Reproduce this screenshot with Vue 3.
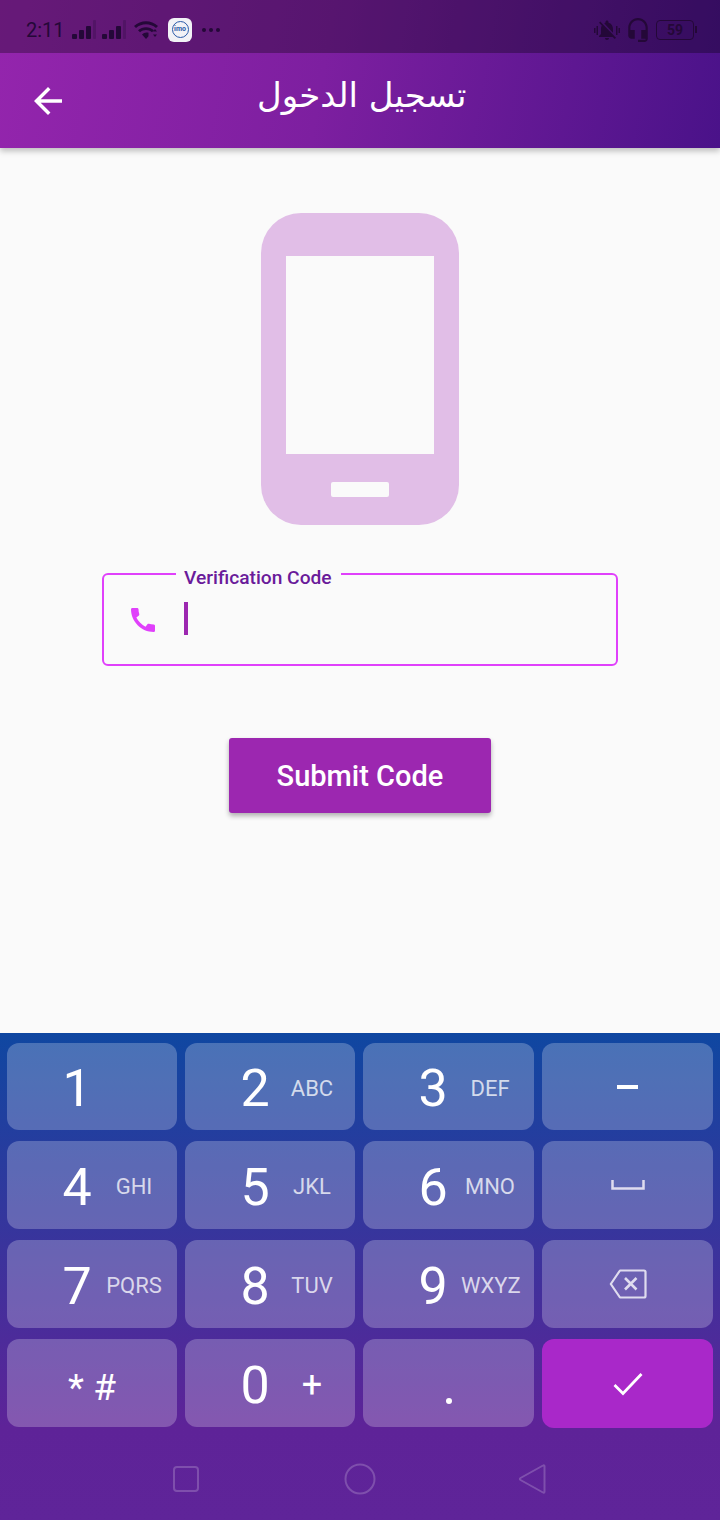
<template>
  <div class="screen">
    <header class="header">
      <div class="status">
        <div class="status-left">
          <span class="time">2:11</span>
          <svg v-for="n in 2" :key="n" class="signal" width="24" height="22" viewBox="0 0 24 22">
            <rect x="0" y="15" width="5" height="5" rx="1" />
            <rect x="7" y="11" width="5" height="9" rx="1" />
            <rect x="14" y="7" width="5" height="13" rx="1" />
            <rect x="21" y="1" width="3" height="19" rx="1" opacity="0.25" />
          </svg>
          <svg class="wifi" width="25" height="22" viewBox="0 0 25 22">
            <path d="M0 7l2 2c5.8-5 14.2-5 20 0l2-2C17.200.7 6.800.7 0 7zm4 4.300l2 2c3.500-3 8.500-3 12 0l2-2c-4.600-4-11.400-4-16 0zm4 4.200l4 4.500 2.500-2.800V13.800c-2.300-.8-4.700-.2-6.500 1.700z" />
            <path d="M19 12.500l2-2.500 2 2.500zM19 15.500l2 2.500 2-2.500z" />
          </svg>
          <span class="imo">
            <span class="imo-ring">imo</span>
          </span>
          <span class="dots"><i></i><i></i><i></i></span>
        </div>
        <div class="status-right">
          <svg width="26" height="24" viewBox="0 0 26 24">
            <g transform="translate(1 0)">
              <path d="M20 18.690L7.840 6.140 5.270 3.490 4 4.760l2.800 2.800v.01c-.52.99-.8 2.160-.8 3.420v5l-2 2v1h13.730l2 2L21 19.720l-1-1.030zM12 22c1.110 0 2-.89 2-2h-4c0 1.110.89 2 2 2zm6-7.320V11c0-3.080-1.640-5.640-4.500-6.320V4c0-.83-.67-1.500-1.500-1.500s-1.500.67-1.500 1.500v.68c-.15.03-.29.08-.42.12-.1.03-.2.07-.3.11h-.01c-.2.08-.4.17-.59.27-.01 0-.01 0-.02.01L18 14.680z" />
            </g>
            <rect x="0" y="10" width="1.500" height="5" />
            <rect x="2.500" y="8" width="1.500" height="9" />
            <rect x="22" y="8" width="1.500" height="9" />
            <rect x="24.500" y="10" width="1.500" height="5" />
          </svg>
          <svg class="headset" width="26" height="26" viewBox="0 0 24 24">
            <path d="M12 1c-4.970 0-9 4.030-9 9v7c0 1.660 1.340 3 3 3h3v-8H5v-2c0-3.870 3.130-7 7-7s7 3.130 7 7v2h-4v8h4v1h-7v2h6c1.660 0 3-1.340 3-3V10c0-4.970-4.030-9-9-9z" />
          </svg>
          <span class="battery"><span>59</span></span>
        </div>
      </div>
      <div class="appbar">
        <svg class="back" width="42" height="42" viewBox="0 0 24 24">
          <path d="M20 11H7.830l5.590-5.590L12 4l-8 8 8 8 1.410-1.410L7.830 13H20v-2z" />
        </svg>
        <h1 class="title">تسجيل الدخول</h1>
      </div>
    </header>

    <main class="content">
      <div class="device">
        <div class="device-screen"></div>
        <div class="device-home"></div>
      </div>

      <div class="field">
        <span class="field-label">Verification Code</span>
        <svg class="field-icon" width="32" height="32" viewBox="0 0 24 24">
          <path d="M20.010 15.380c-1.230 0-2.420-.2-3.530-.56-.35-.12-.74-.03-1.010.24l-1.570 1.970c-2.830-1.350-5.480-3.900-6.890-6.830l1.950-1.660c.27-.28.35-.67.24-1.020-.37-1.110-.56-2.300-.56-3.530 0-.54-.45-.99-.99-.99H4.190C3.650 3 3 3.240 3 3.990 3 13.280 10.730 21 20.010 21c.71 0 .99-.63.99-1.180v-3.450c0-.54-.45-.99-.99-.99z" />
        </svg>
        <span class="cursor"></span>
      </div>

      <button class="submit">Submit Code</button>
    </main>

    <section class="keyboard">
      <div class="keys">
        <div v-for="key in keys" :key="key.id" class="key" :class="'key-' + key.kind">
          <template v-if="key.kind === 'digit'">
            <span class="digit">{{ key.id }}</span>
            <span class="letters" :class="{ plus: key.sub === '+' }">{{ key.sub }}</span>
          </template>
          <span v-else-if="key.kind === 'symbols'" class="symbols">* #</span>
          <span v-else-if="key.kind === 'dot'" class="dot"></span>
          <span v-else-if="key.kind === 'minus'" class="minus"></span>
          <svg v-else-if="key.kind === 'space'" width="34" height="10" viewBox="0 0 34 10">
            <path d="M1.500 0v8.500h31V0" fill="none" stroke="#dfdcef" stroke-width="2.500" />
          </svg>
          <svg v-else-if="key.kind === 'erase'" width="38" height="30" viewBox="0 0 38 30">
            <path d="M11 1.500h24a1.500 1.500 0 0 1 1.500 1.500v24a1.500 1.500 0 0 1-1.500 1.500H11L1.800 15z" fill="none" stroke="#dfdcef" stroke-width="2.200" stroke-linejoin="round" />
            <path d="M16 9l11.500 11.500M27.500 9L16 20.500" fill="none" stroke="#dfdcef" stroke-width="2.600" />
          </svg>
          <svg v-else-if="key.kind === 'done'" width="30" height="24" viewBox="0 0 30 24">
            <path d="M1.500 13l8.500 8.500L28.500 2" fill="none" stroke="#fff" stroke-width="2.800" />
          </svg>
        </div>
      </div>
      <nav class="navbar">
        <svg width="26" height="26" viewBox="0 0 26 26">
          <rect x="1" y="1" width="24" height="24" rx="3" />
        </svg>
        <svg width="32" height="32" viewBox="0 0 32 32">
          <circle cx="16" cy="16" r="14.500" />
        </svg>
        <svg width="28" height="32" viewBox="0 0 28 32">
          <path d="M25 2.500c.8-.5 1.500 0 1.500.8v25.400c0 .8-.7 1.300-1.500.8L2.500 17c-.9-.5-.9-1.500 0-2z" />
        </svg>
      </nav>
    </section>
  </div>
</template>

<script setup>
const keys = [
  { id: "1", kind: "digit", sub: "" },
  { id: "2", kind: "digit", sub: "ABC" },
  { id: "3", kind: "digit", sub: "DEF" },
  { id: "minus", kind: "minus" },
  { id: "4", kind: "digit", sub: "GHI" },
  { id: "5", kind: "digit", sub: "JKL" },
  { id: "6", kind: "digit", sub: "MNO" },
  { id: "space", kind: "space" },
  { id: "7", kind: "digit", sub: "PQRS" },
  { id: "8", kind: "digit", sub: "TUV" },
  { id: "9", kind: "digit", sub: "WXYZ" },
  { id: "erase", kind: "erase" },
  { id: "symbols", kind: "symbols" },
  { id: "0", kind: "digit", sub: "+" },
  { id: "dot", kind: "dot" },
  { id: "done", kind: "done" },
];
</script>

<style>
html,
body {
  margin: 0;
  background: #fafafa;
}
</style>

<style scoped>
.screen {
  width: 720px;
  height: 1520px;
  display: flex;
  flex-direction: column;
  overflow: hidden;
  font-family: Roboto, "Liberation Sans", sans-serif;
  background: #fafafa;
}

.header {
  height: 148px;
  flex: none;
  position: relative;
  z-index: 1;
  background: linear-gradient(100deg, #9425ad 0%, #7d1fa0 45%, #4a1289 100%);
  box-shadow: 0 3px 6px rgba(0, 0, 0, 0.25);
}

.status {
  height: 53px;
  box-sizing: border-box;
  padding: 6px 26px 0;
  display: flex;
  align-items: center;
  justify-content: space-between;
  background: rgba(0, 0, 0, 0.3);
  color: #240838;
  fill: #240838;
}

.status-left,
.status-right {
  display: flex;
  align-items: center;
}

.time {
  font-size: 20px;
  width: 46px;
}

.signal {
  margin-right: 6px;
}

.wifi {
  margin-left: 2px;
}

.imo {
  width: 24px;
  height: 24px;
  margin-left: 9px;
  border-radius: 6px;
  background: #f2f2f6;
  display: flex;
  align-items: center;
  justify-content: center;
}

.imo-ring {
  width: 17px;
  height: 17px;
  box-sizing: border-box;
  border: 1.500px solid #2a5aa8;
  border-radius: 50%;
  color: #2a5aa8;
  font-size: 7px;
  font-weight: 700;
  line-height: 14px;
  text-align: center;
}

.dots {
  display: flex;
  gap: 3px;
  margin-left: 10px;
}

.dots i {
  width: 4px;
  height: 4px;
  border-radius: 50%;
  background: #240838;
}

.status-right {
  gap: 5px;
}

.battery {
  width: 38px;
  height: 20px;
  box-sizing: border-box;
  border: 1.500px solid #240838;
  border-radius: 4px;
  display: flex;
  align-items: center;
  justify-content: center;
  font-size: 14px;
  font-weight: 700;
  position: relative;
}

.battery::after {
  content: "";
  position: absolute;
  right: -4px;
  top: 5px;
  width: 2px;
  height: 7px;
  background: #240838;
}

.appbar {
  height: 95px;
  display: flex;
  align-items: center;
  padding-left: 27px;
}

.back {
  fill: #fff;
}

.title {
  margin: 0 0 0 188px;
  padding-bottom: 12px;
  font-family: "DejaVu Sans", sans-serif;
  font-size: 34px;
  font-weight: 400;
  color: #fff;
  white-space: nowrap;
}

.content {
  flex: 1;
  display: flex;
  flex-direction: column;
  align-items: center;
  padding-top: 65px;
}

.device {
  width: 198px;
  height: 312px;
  border-radius: 40px;
  background: #e1bee7;
  display: flex;
  flex-direction: column;
  align-items: center;
  padding-top: 43px;
  box-sizing: border-box;
}

.device-screen {
  width: 148px;
  height: 198px;
  background: #fafafa;
}

.device-home {
  width: 58px;
  height: 15px;
  margin-top: 28px;
  border-radius: 2px;
  background: #fafafa;
}

.field {
  width: 516px;
  height: 93px;
  box-sizing: border-box;
  margin-top: 48px;
  padding-left: 23px;
  border: 2px solid #e040fb;
  border-radius: 6px;
  display: flex;
  align-items: center;
  position: relative;
}

.field-label {
  position: absolute;
  left: 72px;
  top: -7px;
  padding: 0 9px 0 8px;
  background: #fafafa;
  color: #6a1b9a;
  font-size: 19.200px;
  font-weight: 500;
  line-height: 20px;
}

.field-icon {
  fill: #e040fb;
}

.cursor {
  width: 4px;
  height: 33px;
  margin-left: 25px;
  margin-top: -2px;
  background: #9c27b0;
}

.submit {
  width: 262px;
  height: 75px;
  margin-top: 72px;
  border: 0;
  border-radius: 3px;
  background: #9c27b0;
  color: #fff;
  font-family: inherit;
  font-size: 29px;
  font-weight: 500;
  box-shadow: 0 3px 5px rgba(0, 0, 0, 0.3);
}

.keyboard {
  height: 487px;
  flex: none;
  box-sizing: border-box;
  padding: 10px 7px 0;
  background: linear-gradient(180deg, #0f47a1 0%, #5e2398 81%, #5f2499 100%);
}

.keys {
  display: grid;
  grid-template-columns: 170px 170px 171px 171px;
  grid-template-rows: 87px 88px 88px 88px;
  gap: 11px 8px;
}

.key {
  border-radius: 12px;
  background: rgba(255, 255, 255, 0.24);
  color: #fff;
  display: flex;
  align-items: center;
  justify-content: center;
}

.key-digit {
  justify-content: flex-start;
  padding: 3px 0 0 42px;
}

.digit {
  width: 56px;
  text-align: center;
  font-size: 52px;
  font-weight: 400;
  line-height: 1;
  margin-top: 2px;
}

.letters {
  width: 58px;
  text-align: center;
  font-size: 22px;
  color: rgba(255, 255, 255, 0.75);
  white-space: nowrap;
}

.letters.plus {
  color: #fff;
  font-size: 36px;
}

.symbols {
  font-size: 37px;
  margin-top: 8px;
}

.dot {
  width: 6px;
  height: 6px;
  margin-top: 35px;
  border-radius: 50%;
  background: #fff;
}

.minus {
  width: 21px;
  height: 4px;
  background: #fff;
}

.key-done {
  background: #a928c9;
  height: 89px;
}

.navbar {
  height: 93px;
  display: flex;
  align-items: center;
  padding-left: 166px;
  padding-top: 10px;
  box-sizing: border-box;
  fill: none;
  stroke: rgba(255, 255, 255, 0.2);
  stroke-width: 2;
}

.navbar svg:nth-child(1) {
  margin-right: 145px;
}

.navbar svg:nth-child(2) {
  margin-right: 142px;
}
</style>
